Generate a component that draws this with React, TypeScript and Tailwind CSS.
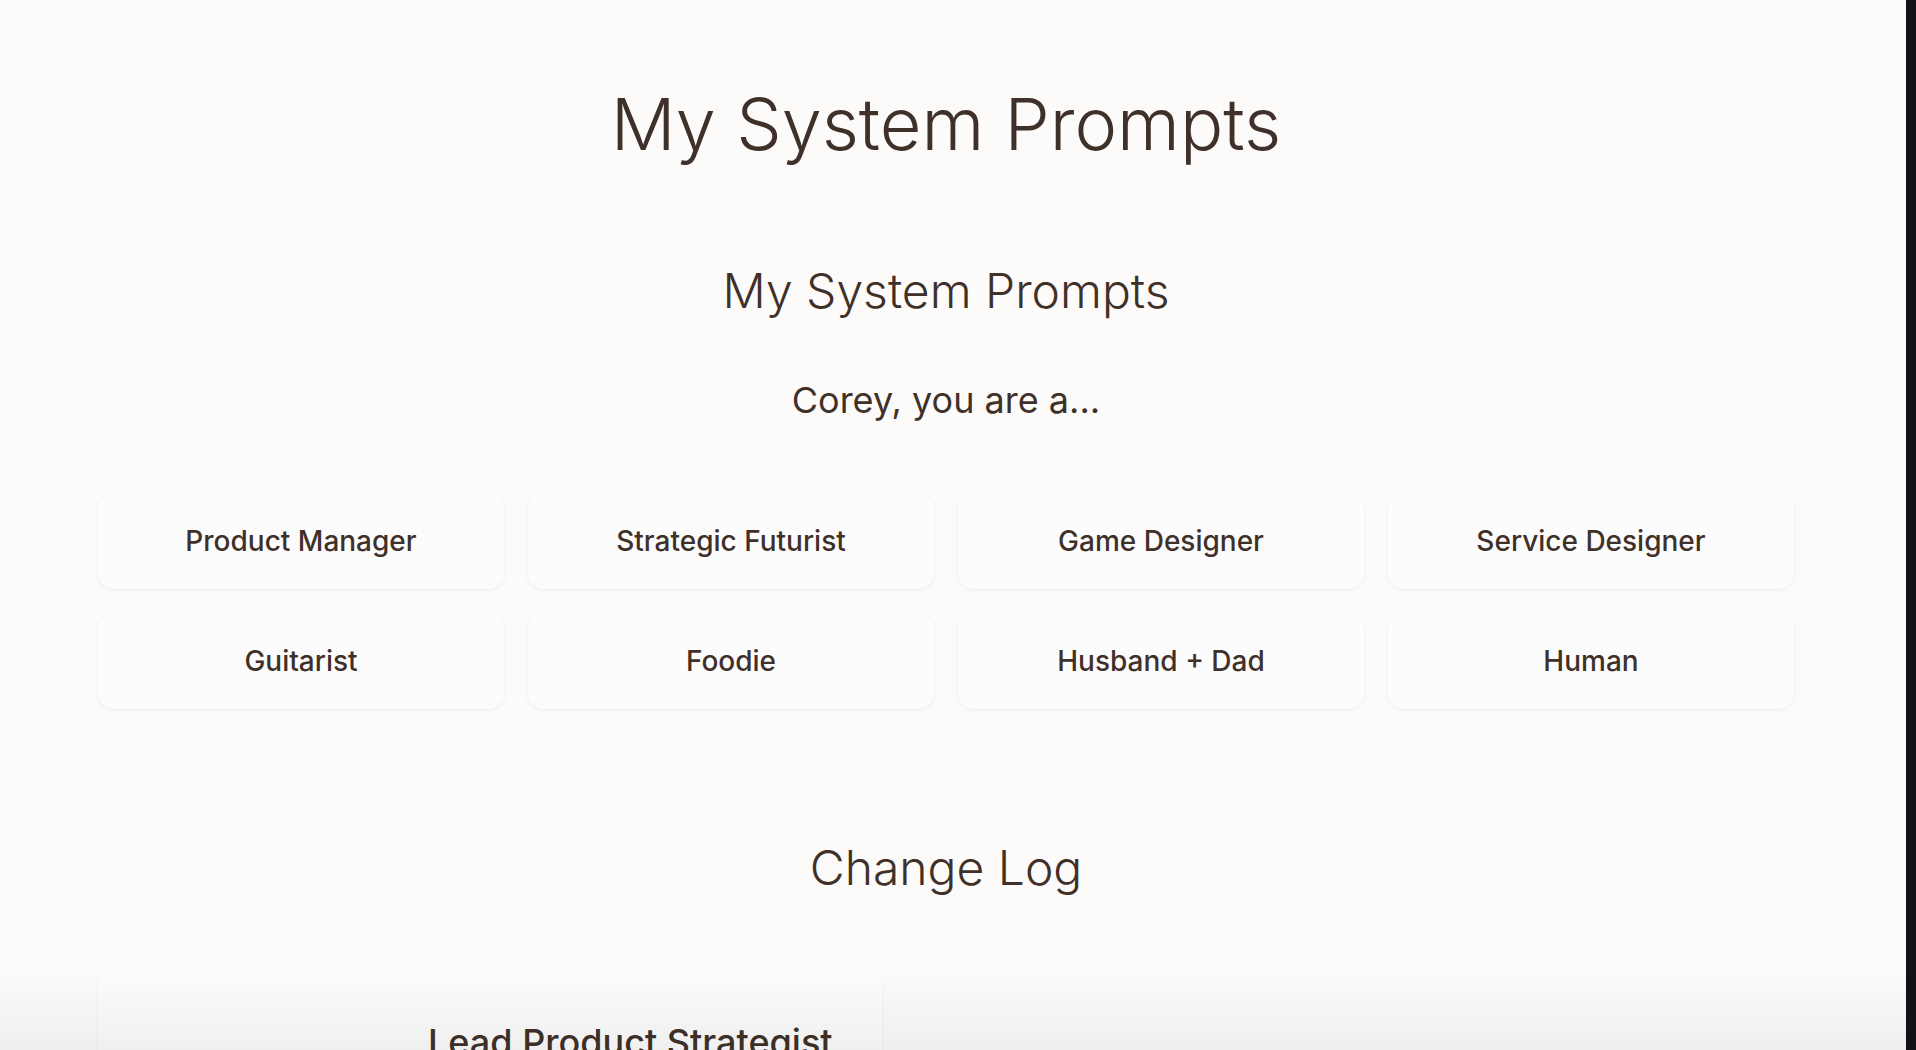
export default function App() {
  const roles = [
    "Product Manager",
    "Strategic Futurist",
    "Game Designer",
    "Service Designer",
    "Guitarist",
    "Foodie",
    "Husband + Dad",
    "Human",
  ]

  return (
    <div
      className="relative flex h-[1050px] overflow-hidden bg-[#fcfbfa] text-[#3f3129]"
      style={{ fontFamily: "Inter, 'Noto Sans', sans-serif" }}
    >
      <main className="flex-1 pl-[98px] pr-[112px]">
        <h1 className="mt-[88px] text-center text-7xl font-light leading-none">My System Prompts</h1>

        <h2 className="mt-[107px] text-center text-5xl font-light leading-none">My System Prompts</h2>

        <p className="mt-[65px] text-center text-4xl leading-[40px]">Corey, you are a...</p>

        <div className="mt-[73px] grid grid-cols-4 gap-6">
          {roles.map((role) => (
            <div
              key={role}
              className="flex h-[96px] items-center justify-center rounded-2xl bg-[#fdfcfc] shadow-[0_1px_4px_rgba(60,40,30,0.06)]"
            >
              <span className="text-[28px] font-medium">{role}</span>
            </div>
          ))}
        </div>

        <h2 className="mt-[135px] text-center text-5xl font-light leading-none">Change Log</h2>

        <div className="mt-[74px] w-[784px] rounded-3xl bg-[#fdfcfc] pl-[330px] pt-[54px] shadow-[0_1px_4px_rgba(60,40,30,0.05)]">
          <h3 className="text-4xl font-medium leading-[44px]">Lead Product Strategist</h3>
          <div className="h-[120px]"></div>
        </div>
      </main>

      <div className="w-[10px] shrink-0 bg-[#111216]"></div>

      <div className="pointer-events-none absolute bottom-0 left-0 right-[10px] h-[80px] bg-linear-to-b from-transparent to-black/5"></div>
    </div>
  )
}
